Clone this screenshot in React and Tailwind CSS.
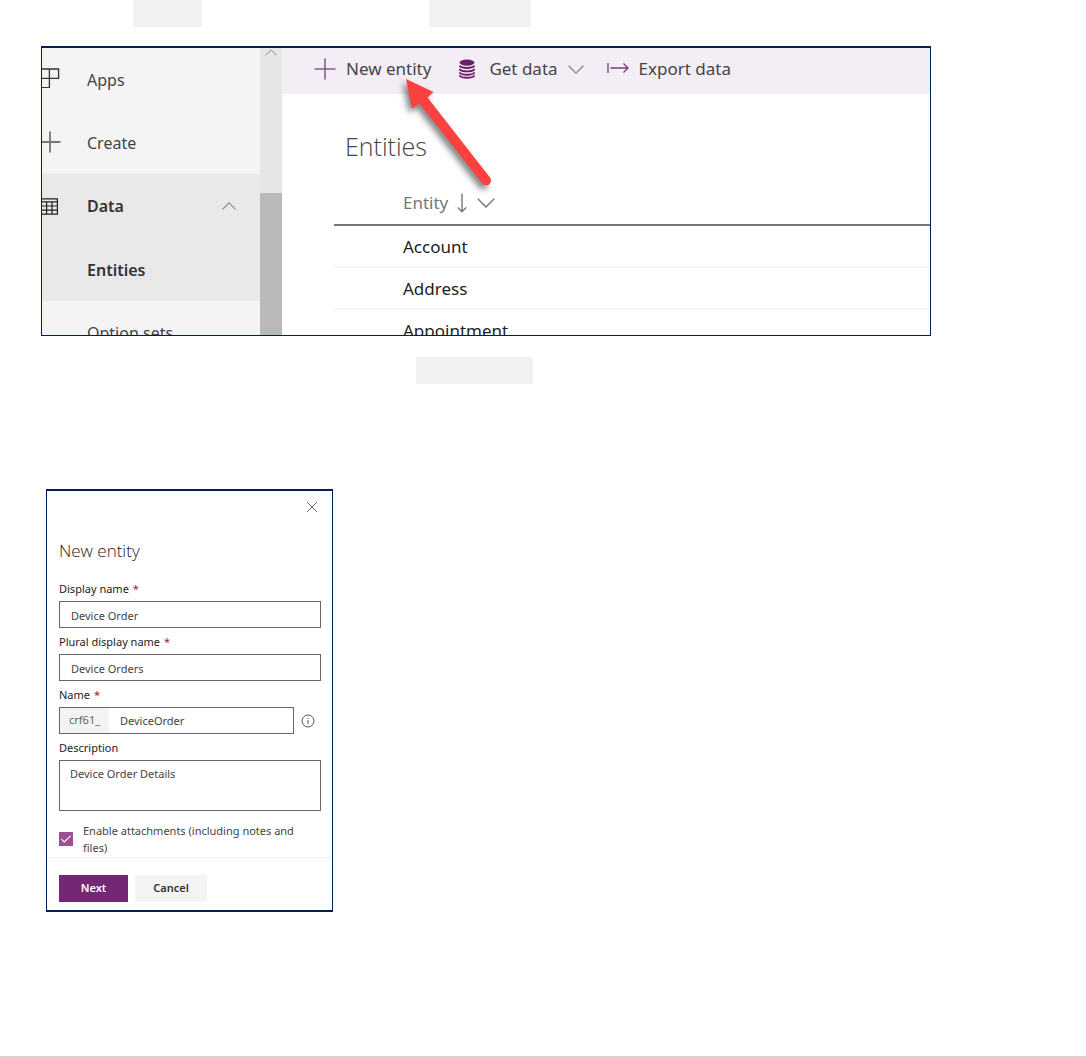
import { useState } from "react";

const ENTITIES = ["Account", "Address", "Appointment"];

function Chevron({ up, className }) {
    return (
        <svg viewBox="0 0 16 9" fill="none" stroke="currentColor" strokeWidth="1.3" className={className}>
            <path d={up ? "M0.6 8.3 8 0.9l7.4 7.4" : "M0.6 0.7 8 8.1l7.4-7.4"} />
        </svg>
    );
}

function Placeholder({ className }) {
    return <span className={`block h-[27px] bg-[#f1f1f1] ${className}`} />;
}

function Sidebar() {
    return (
        <nav className="w-[218px] shrink-0 bg-[#f4f4f4] text-[16px] text-[#444]">
            <a href="#apps" className="flex h-[63px] items-center gap-[27px]">
                <svg viewBox="0 0 18 20" fill="none" stroke="#333" strokeWidth="1.3" className="mb-1 h-5 w-[18px]">
                    <path d="M0 1h16.6v9.4H0M7.4 1v18.6H0" />
                </svg>
                Apps
            </a>
            <a href="#create" className="flex h-[63px] items-center gap-[26px]">
                <svg viewBox="0 0 19 22" fill="none" stroke="#777" strokeWidth="1.8" className="mb-[2px] h-[22px] w-[19px]">
                    <path d="M0 11h18.5M8 0.5v21" />
                </svg>
                Create
            </a>
            <div className="bg-[#e9e9e9] font-semibold text-[#333]">
                <a href="#data" className="flex h-16 items-center pr-6">
                    <svg viewBox="0 0 17 17" fill="none" stroke="#222" strokeWidth="1.2" className="mr-7 h-[17px] w-[17px]">
                        <path d="M0 0.8h15.4v15.4H0M0 3.8h15.4M0 8h15.4M0 12.2h15.4M4.6 3.8v12.4M10 3.8v12.4" />
                    </svg>
                    Data
                    <Chevron up className="ml-auto h-2 w-[14px] text-[#888]" />
                </a>
                <a href="#entities" className="flex h-[63px] items-center pl-[45px]">
                    Entities
                </a>
            </div>
            <a href="#option-sets" className="flex h-[63px] items-center pl-[45px]">
                Option sets
            </a>
        </nav>
    );
}

function Toolbar() {
    return (
        <div className="flex h-[46px] items-center bg-[#f3edf5] pb-1 pl-8 text-[17px] text-[#444]">
            <button type="button" className="flex items-center gap-[10px]">
                <svg viewBox="0 0 22 22" fill="none" stroke="#8a5a8c" strokeWidth="1.6" className="h-[22px] w-[22px]">
                    <path d="M0.5 11h21M11 0.5v21" />
                </svg>
                New entity
            </button>
            <button type="button" className="ml-7 flex items-center">
                <svg viewBox="0 0 16 20" className="mr-[14px] h-5 w-4">
                    <ellipse cx="8" cy="3.6" rx="7.4" ry="3.1" fill="#6b1f68" />
                    <path
                        d="M1 7.2c2 2.4 12 2.4 14 0M1 10.6c2 2.4 12 2.4 14 0M1 14c2 2.4 12 2.4 14 0M1 17c2 2.4 12 2.4 14 0"
                        fill="none"
                        stroke="#6b1f68"
                        strokeWidth="1.9"
                        strokeLinecap="round"
                    />
                </svg>
                Get data
                <Chevron className="ml-[10px] h-[9px] w-4 text-[#888]" />
            </button>
            <button type="button" className="ml-[23px] flex items-center gap-[10px]">
                <svg viewBox="0 0 22 12" fill="none" stroke="#7a3a7c" strokeWidth="1.3" className="mb-[2px] h-3 w-[22px]">
                    <path d="M1 1v10M3.5 6h17.5M16.5 1.5 21 6l-4.5 4.5" />
                </svg>
                Export data
            </button>
        </div>
    );
}

function Arrow() {
    return (
        <svg viewBox="0 0 100 124" className="pointer-events-none absolute top-[28px] left-[120px] h-[124px] w-[100px] overflow-visible">
            <path
                d="M4 3 31.5 16 25.5 21.5 88 101.5a4.8 4.8 0 0 1-7.6 6L17.5 27.5 10 32.5Z"
                fill="#fd4141"
                className="drop-shadow-[-3px_4px_3px_rgba(0,0,0,0.5)]"
            />
        </svg>
    );
}

function EntitiesPanel() {
    return (
        <section className="ml-[41px] mt-[19px] flex h-[290px] max-w-[890px] overflow-hidden border border-t-2 border-[#001f52]">
            <Sidebar />
            <div className="flex w-[22px] shrink-0 flex-col items-center bg-[#e6e6e6]">
                <Chevron up className="mt-px h-[7px] w-3 text-[#888]" />
                <div className="mt-[137px] w-full flex-1 bg-[#b9b9b9]" />
            </div>
            <main className="relative min-w-0 flex-1">
                <Toolbar />
                <h1 className="mt-[34px] pl-[63px] font-['Open_Sans',sans-serif] text-[25px] leading-9 font-light text-[#444]">
                    Entities
                </h1>
                <table className="mt-[15px] ml-[52px] w-full border-collapse text-left text-[17px] text-[#222]">
                    <thead>
                        <tr className="h-[46px] border-b-2 border-[#777]">
                            <th className="pt-[2px] pl-[69px] font-normal text-[#777]">
                                <span className="flex items-center">
                                    Entity
                                    <svg viewBox="0 0 10 20" fill="none" stroke="currentColor" strokeWidth="1.4" className="ml-[9px] h-5 w-[10px]">
                                        <path d="M5 0.5v18M0.8 14.5 5 18.7l4.2-4.2" />
                                    </svg>
                                    <Chevron className="ml-[10px] h-[10px] w-[18px]" />
                                </span>
                            </th>
                        </tr>
                    </thead>
                    <tbody>
                        {ENTITIES.map((name) => (
                            <tr key={name} className="h-[42px] border-b-2 border-[#f6f6f6]">
                                <td className="pt-[2px] pl-[69px]">{name}</td>
                            </tr>
                        ))}
                    </tbody>
                </table>
                <Arrow />
            </main>
        </section>
    );
}

function Label({ htmlFor, required, children }) {
    return (
        <label htmlFor={htmlFor} className="flex h-[26px] items-center pt-[2px] text-[#222]">
            {children}
            {required && <span className="ml-1 text-[#b3141b]">*</span>}
        </label>
    );
}

function NewEntityForm() {
    const [form, setForm] = useState({
        displayName: "Device Order",
        pluralName: "Device Orders",
        name: "DeviceOrder",
        description: "Device Order Details",
        attachments: true,
    });

    const handleChange = (e) => {
        const { name, type, checked, value } = e.target;
        setForm({ ...form, [name]: type === "checkbox" ? checked : value });
    };

    return (
        <form
            onSubmit={(e) => e.preventDefault()}
            className="mt-[105px] ml-[46px] max-w-[287px] border border-y-2 border-[#001f52] text-[11px] text-[#444]"
        >
            <div className="flex justify-end pt-[10px] pr-[14px]">
                <button type="button" aria-label="Close" className="block">
                    <svg viewBox="0 0 12 12" fill="none" stroke="#667" strokeWidth="1" className="h-3 w-3">
                        <path d="M1 1l10 10M11 1 1 11" />
                    </svg>
                </button>
            </div>
            <div className="pr-[11px] pl-3">
                <h2 className="mt-[26px] mb-3 font-['Open_Sans',sans-serif] text-[17px] leading-6 font-light text-[#222]">
                    New entity
                </h2>

                <Label htmlFor="displayName" required>Display name</Label>
                <input
                    id="displayName"
                    name="displayName"
                    value={form.displayName}
                    onChange={handleChange}
                    className="block h-[27px] w-full border border-[#666] px-[11px] pt-[2px]"
                />
                <Label htmlFor="pluralName" required>Plural display name</Label>
                <input
                    id="pluralName"
                    name="pluralName"
                    value={form.pluralName}
                    onChange={handleChange}
                    className="block h-[27px] w-full border border-[#666] px-[11px] pt-[2px]"
                />
                <Label htmlFor="name" required>Name</Label>
                <div className="flex items-center gap-[7px]">
                    <div className="flex h-[27px] flex-1 border border-[#666]">
                        <span className="flex w-[49px] items-center bg-[#f3f3f3] pl-[9px] text-[#666]">crf61_</span>
                        <input
                            id="name"
                            name="name"
                            value={form.name}
                            onChange={handleChange}
                            className="w-0 flex-1 px-[11px] pt-[2px]"
                        />
                    </div>
                    <svg viewBox="0 0 14 14" fill="none" stroke="#555" strokeWidth="1" className="mr-[6px] h-[14px] w-[14px]">
                        <circle cx="7" cy="7" r="6" />
                        <path d="M7 6v4.2M7 3.8v1.2" />
                    </svg>
                </div>
                <Label htmlFor="description">Description</Label>
                <textarea
                    id="description"
                    name="description"
                    value={form.description}
                    onChange={handleChange}
                    className="block h-[51px] w-full resize-none border border-[#666] px-[10px] py-1 leading-[17px]"
                />

                <div className="mt-[11px] flex items-center gap-[10px] pr-4 pb-px">
                    <span className="relative block h-[14px] w-[14px] shrink-0">
                        <input
                            id="attachments"
                            name="attachments"
                            type="checkbox"
                            checked={form.attachments}
                            onChange={handleChange}
                            className="block h-[14px] w-[14px] appearance-none border border-[#9b4f96] checked:bg-[#9b4f96]"
                        />
                        {form.attachments && (
                            <svg viewBox="0 0 14 14" fill="none" stroke="#fff" strokeWidth="1.1" className="pointer-events-none absolute inset-0">
                                <path d="M2.3 7.2 5.2 10l6.4-6.2" />
                            </svg>
                        )}
                    </span>
                    <label htmlFor="attachments" className="leading-[17px]">
                        Enable attachments (including notes and files)
                    </label>
                </div>
            </div>
            <div className="flex gap-[7px] border-t border-[#eee] px-3 pt-[17px] pb-2 font-semibold">
                <button type="submit" className="h-[27px] w-[69px] bg-[#742774] text-white">
                    Next
                </button>
                <button type="button" className="h-[27px] w-[72px] bg-[#f4f4f4] text-[#333]">
                    Cancel
                </button>
            </div>
        </form>
    );
}

export default function App() {
    return (
        <div className="min-h-screen bg-white font-['Noto_Sans',sans-serif]">
            <div className="flex gap-[227px] pl-[133px]">
                <Placeholder className="w-[69px]" />
                <Placeholder className="w-[102px]" />
            </div>
            <EntitiesPanel />
            <div className="mt-[21px] pl-[416px]">
                <Placeholder className="w-[117px]" />
            </div>
            <NewEntityForm />
            <hr className="mt-36 border-[#d6d6d6]" />
        </div>
    );
}
